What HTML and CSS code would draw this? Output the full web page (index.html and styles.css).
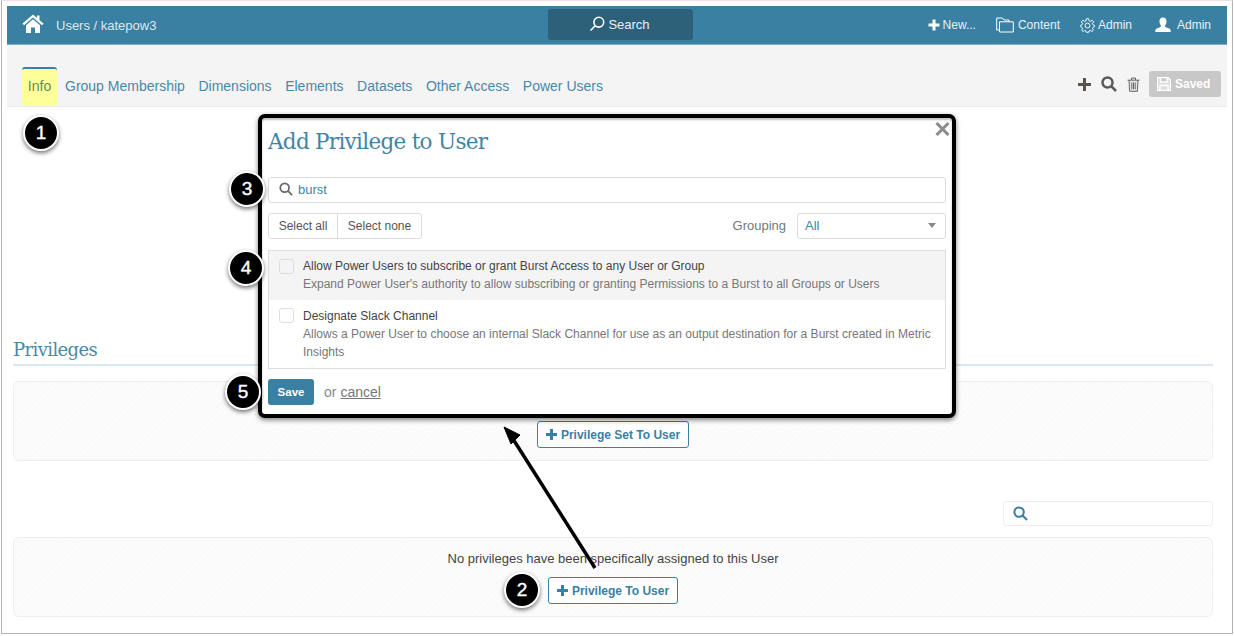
FILE: index.html
```html
<!DOCTYPE html>
<html lang="en">
<head>
    <meta charset="UTF-8">
    <title>Add Privilege to User</title>
    <link rel="stylesheet" href="styles.css">
</head>
<body>
    <div class="frame">
        <header class="topbar">
            <div class="crumbs">
                <svg class="home-icon" viewBox="0 0 22 19"><path d="M11 0.5 L0.5 9.6 L2 11.2 L11 3.6 L20 11.2 L21.5 9.6 L17.5 6.2 V1.5 H15 V4 Z M4 11.2 V19 H9 V13.5 H13 V19 H18 V11.2 L11 5.2 Z"/></svg>
                <span>Users / katepow3</span>
            </div>
            <div class="search-btn">
                <svg class="search-btn-icon" viewBox="0 0 16 16"><circle cx="9.8" cy="6.2" r="4.9"/><path d="M6.2 9.8 L1.5 14.5"/></svg>
                <span>Search</span>
            </div>
            <nav class="top-links">
                <a class="top-new"><svg viewBox="0 0 12 12"><path d="M4.5 0.5 H7.5 V4.5 H11.5 V7.5 H7.5 V11.5 H4.5 V7.5 H0.5 V4.5 H4.5 Z"/></svg>New...</a>
                <a class="top-content"><svg viewBox="0 0 18 16"><path class="line" d="M3.5 13 H0.7 V1 H6.5 L8 3 H13 V4.8 M3.5 4.8 H17.3 V15 H3.5 Z"/></svg>Content</a>
                <a class="top-admin"><svg viewBox="0 0 16 16"><circle class="line" cx="8" cy="8" r="2.6"/><path class="line" d="M6.8 0.8 H9.2 L9.6 2.9 L11.2 3.6 L13 2.4 L14.6 4.1 L13.3 5.8 L14 7.3 L15.3 7.7 V9.3 L14 10 L13.3 11.3 L14.2 13 L12.7 14.4 L11 13.3 L9.6 13.9 L9.2 15.3 H6.8 L6.4 13.9 L5 13.3 L3.3 14.4 L1.8 13 L2.7 11.3 L2 10 L0.7 9.3 V7.7 L2 7.3 L2.7 5.8 L1.4 4.1 L3 2.4 L4.8 3.6 L6.4 2.9 Z"/></svg>Admin</a>
                <a class="top-user"><svg viewBox="0 0 16 16"><path d="M8 0.5 C10.5 0.5 11.8 2.4 11.5 5 C11.3 7 10.4 8.3 9.8 9 C10 10.2 12.5 10.7 14.2 11.5 C15.4 12 15.8 13 15.8 15 H0.2 C0.2 13 0.6 12 1.8 11.5 C3.5 10.7 6 10.2 6.2 9 C5.6 8.3 4.7 7 4.5 5 C4.2 2.4 5.5 0.5 8 0.5 Z"/></svg>Admin</a>
            </nav>
        </header>

        <div class="tabbar">
            <ul class="tabs">
                <li class="tab tab-active">Info</li>
                <li class="tab">Group Membership</li>
                <li class="tab">Dimensions</li>
                <li class="tab">Elements</li>
                <li class="tab">Datasets</li>
                <li class="tab">Other Access</li>
                <li class="tab">Power Users</li>
            </ul>
            <div class="tools">
                <svg class="tool-plus" viewBox="0 0 13 13"><path d="M5 0 H8 V5 H13 V8 H8 V13 H5 V8 H0 V5 H5 Z"/></svg>
                <svg class="tool-search" viewBox="0 0 16 16"><circle cx="6.5" cy="6.5" r="5"/><path d="M10.2 10.2 L15 15"/></svg>
                <svg class="tool-trash" viewBox="0 0 13 15"><path d="M0.5 3.2 H12.5 M4.5 3 V1 H8.5 V3 M2 3.2 L2.6 14.3 H10.4 L11 3.2 M4.8 5.5 V12.3 M6.5 5.5 V12.3 M8.2 5.5 V12.3"/></svg>
                <div class="saved-btn">
                    <svg viewBox="0 0 14 14"><path d="M0.5 0.5 H11 L13.5 3 V13.5 H0.5 Z M3.5 1 V5 H10 V1 M3 13 V8.5 H11 V13" /></svg>
                    Saved
                </div>
            </div>
        </div>

        <main class="content">
            <h2 class="section-title">Privileges</h2>
            <section class="panel panel-set">
                <button class="add-btn"><svg class="add-plus" viewBox="0 0 11 11"><path d="M4 0 H7 V4 H11 V7 H7 V11 H4 V7 H0 V4 H4 Z"/></svg> Privilege Set To User</button>
            </section>
            <div class="filter-row">
                <div class="filter-box">
                    <svg viewBox="0 0 16 16"><circle cx="6.5" cy="6.5" r="5"/><path d="M10.2 10.2 L15 15"/></svg>
                </div>
            </div>
            <section class="panel panel-user">
                <p>No privileges have been specifically assigned to this User</p>
                <button class="add-btn"><svg class="add-plus" viewBox="0 0 11 11"><path d="M4 0 H7 V4 H11 V7 H7 V11 H4 V7 H0 V4 H4 Z"/></svg> Privilege To User</button>
            </section>
        </main>

        <div class="modal">
            <svg class="modal-close" viewBox="0 0 15 14"><path d="M1.5 1 L13.5 13 M13.5 1 L1.5 13"/></svg>
            <h1 class="modal-title">Add Privilege to User</h1>
            <div class="modal-search">
                <svg viewBox="0 0 16 16"><circle cx="6.5" cy="6.5" r="5"/><path d="M10.2 10.2 L15 15"/></svg>
                <span>burst</span>
            </div>
            <div class="modal-controls">
                <div class="btn-group">
                    <span class="btn-all">Select all</span>
                    <span class="btn-none">Select none</span>
                </div>
                <div class="grouping">
                    <label>Grouping</label>
                    <div class="grouping-select">All<i class="caret"></i></div>
                </div>
            </div>
            <ul class="priv-list">
                <li class="priv-item priv-item-hover">
                    <span class="checkbox"></span>
                    <div>
                        <div class="priv-name">Allow Power Users to subscribe or grant Burst Access to any User or Group</div>
                        <div class="priv-desc">Expand Power User's authority to allow subscribing or granting Permissions to a Burst to all Groups or Users</div>
                    </div>
                </li>
                <li class="priv-item">
                    <span class="checkbox"></span>
                    <div>
                        <div class="priv-name">Designate Slack Channel</div>
                        <div class="priv-desc">Allows a Power User to choose an internal Slack Channel for use as an output destination for a Burst created in Metric Insights</div>
                    </div>
                </li>
            </ul>
            <div class="modal-footer">
                <button class="save-btn">Save</button>
                <span class="or">or</span>
                <a class="cancel">cancel</a>
            </div>
        </div>

        <svg class="arrow" viewBox="0 0 110 160" width="110" height="160">
            <path d="M93 145 L11 16" fill="none" stroke="#000" stroke-width="3.5"/>
            <path d="M2 4 L18 12 L9 21 Z" fill="#000" stroke="#000" stroke-width="1"/>
        </svg>

        <span class="step step1">1</span>
        <span class="step step2">2</span>
        <span class="step step3">3</span>
        <span class="step step4">4</span>
        <span class="step step5">5</span>
    </div>
</body>
</html>
```

FILE: styles.css
```css
* {
    box-sizing: border-box;
}

body {
    margin: 0;
    background: #fff;
    font-family: 'Liberation Sans', Arial, sans-serif;
    overflow: hidden;
}

.frame {
    position: relative;
    width: 1232px;
    height: 634px;
    margin-left: 1px;
    padding: 5px 5px 0 5px;
    border: 1px solid #b4b4b4;
    border-top-color: #e6e6e6;
    background: #fff;
}

/* top bar */
.topbar {
    display: flex;
    align-items: center;
    height: 39px;
    background: #3a80a2;
    border-bottom: 1px solid #7fb0c6;
    color: #fff;
    position: relative;
}

.crumbs {
    display: flex;
    align-items: center;
    padding-left: 15px;
    width: 541px;
    font-size: 13px;
    color: #dbe8ee;
}
.home-icon {
    width: 22px;
    height: 19px;
    margin-right: 12px;
    margin-top: -4px;
    fill: #fff;
}

.search-btn {
    display: flex;
    align-items: center;
    justify-content: center;
    width: 145px;
    height: 31px;
    margin-bottom: 2px;
    padding-right: 2px;
    background: #2d6079;
    border-radius: 3px;
    font-size: 13px;
    color: #e8f0f4;
}
.search-btn-icon {
    width: 16px;
    height: 16px;
    margin-right: 3px;
    fill: none;
    stroke: #fff;
    stroke-width: 1.6;
}

.top-links {
    display: flex;
    align-items: center;
    margin-left: auto;
    padding-right: 16px;
    font-size: 12px;
    color: #e8f0f4;
}
.top-links a {
    display: flex;
    align-items: center;
}
.top-links svg {
    fill: #fff;
}
.top-links .line {
    fill: none;
    stroke: #fff;
    stroke-width: 1;
}
.top-new svg { width: 12px; height: 12px; margin-right: 3px; }
.top-content { margin-left: 20px; }
.top-content svg { width: 18px; height: 16px; margin-right: 4px; }
.top-admin { margin-left: 20px; }
.top-admin svg { width: 15px; height: 15px; margin-right: 3px; }
.top-user { margin-left: 23px; }
.top-user svg { width: 16px; height: 16px; margin-right: 6px; }

/* tabs */
.tabbar {
    display: flex;
    align-items: flex-end;
    justify-content: space-between;
    height: 62px;
    background: #f4f4f4;
    border-bottom: 1px solid #ececec;
}
.tabs {
    display: flex;
    gap: 13.6px;
    list-style: none;
    margin: 0 0 1px 15px;
    padding: 0;
    font-size: 14px;
    color: #4a88a8;
}
.tab {
    height: 38px;
    line-height: 38px;
}
.tab-active {
    width: 35px;
    margin-right: -5.6px;
    text-align: center;
    background: #ffff99;
    border-top: 2px solid #3a80a2;
    border-radius: 3px 3px 0 0;
    line-height: 35px;
    color: #5f8f5a;
}

.tools {
    display: flex;
    align-items: center;
    margin: 0 6px 9px 0;
}
.tools svg {
    display: block;
}
.tool-plus {
    width: 13px;
    height: 13px;
    fill: #5a5350;
}
.tool-search {
    width: 16px;
    height: 16px;
    margin-left: 10px;
    fill: none;
    stroke: #5a5a5a;
    stroke-width: 2.5;
}
.tool-trash {
    width: 13px;
    height: 15px;
    margin-left: 10px;
    fill: #e6e6e6;
    stroke: #666;
    stroke-width: 1;
}
.saved-btn {
    display: flex;
    align-items: center;
    width: 72px;
    height: 26px;
    margin-left: 9px;
    padding-left: 8px;
    background: #c8c8c8;
    border-radius: 3px;
    color: #fff;
    font-size: 12px;
    font-weight: bold;
}
.saved-btn svg {
    width: 14px;
    height: 14px;
    margin-right: 4px;
    fill: rgba(255,255,255,0.4);
    stroke: #fff;
    stroke-width: 1.3;
}

/* page body */
.content {
    padding: 0 14px 0 6px;
}
.section-title {
    margin: 231px 0 0 0;
    height: 28px;
    border-bottom: 2px solid #dbe8ee;
    font-family: 'DejaVu Serif', serif;
    font-weight: normal;
    font-size: 18px;
    letter-spacing: -0.6px;
    line-height: 24px;
    color: #4a88a8;
}
.panel {
    display: flex;
    flex-direction: column;
    align-items: center;
    border: 1px solid #eeeeee;
    border-radius: 6px;
    background: repeating-linear-gradient(135deg, #fafafa 0, #fafafa 2px, #fcfcfc 2px, #fcfcfc 4px);
}
.panel-set {
    height: 80px;
    margin-top: 15px;
    padding: 39px 0 0 0;
}
.panel-user {
    height: 80px;
    margin-top: 11px;
    padding-top: 13px;
}
.panel-user p {
    margin: 0 0 10px 0;
    height: 16px;
    line-height: 16px;
    font-size: 13px;
    color: #444;
}

.add-btn {
    display: flex;
    align-items: center;
    justify-content: center;
    gap: 4px;
    height: 27px;
    padding: 0 8px;
    border: 1px solid #3a80a2;
    border-radius: 3px;
    background: #fff;
    color: #3a80a2;
    font-family: inherit;
    font-size: 12px;
    font-weight: bold;
}
.add-plus {
    width: 11px;
    height: 11px;
    fill: #3a80a2;
}

.filter-row {
    display: flex;
    justify-content: flex-end;
    margin-top: 40px;
}
.filter-box {
    display: flex;
    align-items: center;
    width: 210px;
    height: 25px;
    padding-left: 9px;
    border: 1px solid #eeeeee;
    border-radius: 3px;
    background: #fff;
}
.filter-box svg {
    width: 15px;
    height: 15px;
    fill: none;
    stroke: #3a80a2;
    stroke-width: 2.2;
}

/* modal */
.modal {
    position: absolute;
    left: 256px;
    top: 113px;
    width: 698px;
    height: 304px;
    padding: 0 6px;
    background: #fff;
    border: 4px solid #000;
    border-radius: 7px;
    box-shadow: 0 2px 5px rgba(0,0,0,0.5), inset 0 2px 2px rgba(0,0,0,0.25);
}
.modal-close {
    position: absolute;
    right: 2px;
    top: 4px;
    width: 15px;
    height: 14px;
    fill: none;
    stroke: #8c8c8c;
    stroke-width: 3;
}
.modal-title {
    margin: 0;
    padding-top: 10px;
    height: 59px;
    font-family: 'DejaVu Serif', serif;
    font-weight: normal;
    font-size: 21.5px;
    letter-spacing: -0.7px;
    line-height: 28px;
    color: #3f84a5;
}
.modal-search {
    display: flex;
    align-items: center;
    height: 26px;
    padding: 0 0 2px 10px;
    border: 1px solid #ddd;
    border-radius: 3px;
    font-size: 13px;
    color: #3f84a5;
}
.modal-search svg {
    width: 14px;
    height: 14px;
    margin-right: 5px;
    fill: none;
    stroke: #666;
    stroke-width: 2;
}
.modal-controls {
    display: flex;
    justify-content: space-between;
    margin-top: 10px;
}
.btn-group {
    display: flex;
    height: 26px;
    border: 1px solid #ddd;
    border-radius: 3px;
    font-size: 12px;
    line-height: 24px;
    color: #555;
}
.btn-all {
    width: 69px;
    text-align: center;
    border-right: 1px solid #ddd;
}
.btn-none {
    width: 83px;
    text-align: center;
}
.grouping {
    display: flex;
    align-items: center;
    gap: 11px;
    font-size: 13px;
    color: #777;
}
.grouping label {
    margin-bottom: 2px;
}
.grouping-select {
    position: relative;
    width: 149px;
    height: 26px;
    padding-left: 7px;
    border: 1px solid #ddd;
    border-radius: 3px;
    line-height: 24px;
    color: #3f84a5;
}
.caret {
    position: absolute;
    right: 9px;
    top: 9px;
    border-left: 4px solid transparent;
    border-right: 4px solid transparent;
    border-top: 5px solid #888;
}
.priv-list {
    list-style: none;
    height: 119px;
    margin: 11px 0 0 0;
    padding: 0;
    border: 1px solid #ddd;
}
.priv-item {
    display: flex;
    padding: 7px 10px 0 10px;
    font-size: 12px;
    line-height: 18px;
}
.priv-item-hover {
    height: 49px;
    padding-top: 6px;
    background: #f4f4f4;
}
.checkbox {
    flex: none;
    width: 15px;
    height: 15px;
    margin: 1px 9px 0 0;
    border: 1px solid #ddd;
    border-radius: 3px;
    background: #fff;
}
.priv-item-hover .checkbox {
    margin-top: 2px;
    background: #f4f4f4;
}
.priv-name {
    color: #444;
}
.priv-desc {
    color: #777;
}
.modal-footer {
    display: flex;
    align-items: center;
    margin-top: 10px;
    font-size: 14px;
    color: #888;
}
.save-btn {
    width: 46px;
    height: 26px;
    padding: 0;
    border: none;
    border-radius: 3px;
    background: #3a80a2;
    color: #fff;
    font-family: inherit;
    font-size: 11.5px;
    font-weight: bold;
}
.or {
    margin: 0 4px 0 10px;
}
.cancel {
    color: #777;
    text-decoration: underline;
}

/* annotations */
.arrow {
    position: absolute;
    left: 500px;
    top: 422px;
}
.step {
    position: absolute;
    width: 36px;
    height: 36px;
    border: 2px solid #fff;
    border-radius: 50%;
    background: #000;
    color: #fff;
    font-size: 19px;
    line-height: 32px;
    text-align: center;
    -webkit-text-stroke: 0.4px #fff;
    box-shadow: 0 2px 4px rgba(0,0,0,0.55);
}
.step1 { left: 21px; top: 114px; }
.step2 { left: 502px; top: 571px; }
.step3 { left: 227px; top: 170px; }
.step4 { left: 226px; top: 249px; }
.step5 { left: 223px; top: 373px; }
```
